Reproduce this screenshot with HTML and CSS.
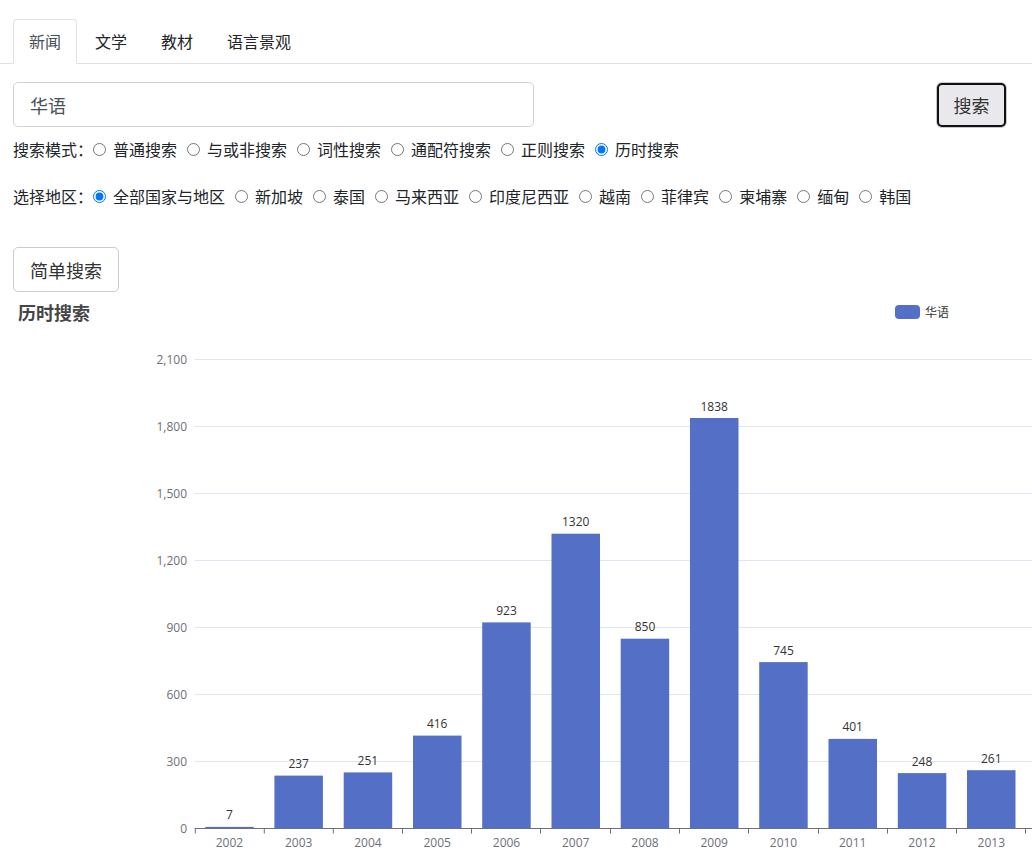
FILE: index.html
```html
<!DOCTYPE html>
<html lang="zh">
<head>
<meta charset="utf-8">
<title>历时搜索</title>
<link rel="stylesheet" href="styles.css">
</head>
<body>
<ul class="tabs">
  <li class="tab active">新闻</li>
  <li class="tab">文学</li>
  <li class="tab">教材</li>
  <li class="tab">语言景观</li>
</ul>
<div class="main">
  <div class="search-row">
    <input class="query" type="text" value="华语">
    <button class="search-btn">搜索</button>
  </div>
  <div class="radio-row mode-row">
    <span class="prefix">搜索模式：</span>
    <input type="radio" name="mode"><span class="opt">普通搜索</span>
    <input type="radio" name="mode"><span class="opt">与或非搜索</span>
    <input type="radio" name="mode"><span class="opt">词性搜索</span>
    <input type="radio" name="mode"><span class="opt">通配符搜索</span>
    <input type="radio" name="mode"><span class="opt">正则搜索</span>
    <input type="radio" name="mode" checked><span class="opt">历时搜索</span>
  </div>
  <div class="radio-row region-row">
    <span class="prefix">选择地区：</span>
    <input type="radio" name="region" checked><span class="opt">全部国家与地区</span>
    <input type="radio" name="region"><span class="opt">新加坡</span>
    <input type="radio" name="region"><span class="opt">泰国</span>
    <input type="radio" name="region"><span class="opt">马来西亚</span>
    <input type="radio" name="region"><span class="opt">印度尼西亚</span>
    <input type="radio" name="region"><span class="opt">越南</span>
    <input type="radio" name="region"><span class="opt">菲律宾</span>
    <input type="radio" name="region"><span class="opt">柬埔寨</span>
    <input type="radio" name="region"><span class="opt">缅甸</span>
    <input type="radio" name="region"><span class="opt">韩国</span>
  </div>
  <button class="simple-btn">简单搜索</button>
  <div class="chart">
    <svg class="chart-svg" width="1818" height="589" viewBox="0 0 1818 589">
      <text class="c-title" x="5" y="20">历时搜索</text>
      <rect class="c-bar" x="882" y="5" width="25" height="14" rx="4"/>
      <text class="c-legend" x="912" y="16.5">华语</text>

      <g class="c-grid">
        <line x1="181.8" y1="59.5" x2="1636.2" y2="59.5"/>
        <line x1="181.8" y1="126.5" x2="1636.2" y2="126.5"/>
        <line x1="181.8" y1="193.5" x2="1636.2" y2="193.5"/>
        <line x1="181.8" y1="260.5" x2="1636.2" y2="260.5"/>
        <line x1="181.8" y1="327.5" x2="1636.2" y2="327.5"/>
        <line x1="181.8" y1="394.5" x2="1636.2" y2="394.5"/>
        <line x1="181.8" y1="461.5" x2="1636.2" y2="461.5"/>
      </g>
      <g class="c-ylab">
        <text x="174" y="64">2,100</text>
        <text x="174" y="131">1,800</text>
        <text x="174" y="198">1,500</text>
        <text x="174" y="265">1,200</text>
        <text x="174" y="332">900</text>
        <text x="174" y="399">600</text>
        <text x="174" y="466">300</text>
        <text x="174" y="533">0</text>
      </g>

      <g class="c-bars">
        <rect class="c-bar" x="192.2" y="526.9" width="48.5" height="1.6"/>
        <rect class="c-bar" x="261.4" y="475.6" width="48.5" height="52.9"/>
        <rect class="c-bar" x="330.7" y="472.4" width="48.5" height="56.1"/>
        <rect class="c-bar" x="400.0" y="435.6" width="48.5" height="92.9"/>
        <rect class="c-bar" x="469.2" y="322.4" width="48.5" height="206.1"/>
        <rect class="c-bar" x="538.5" y="233.7" width="48.5" height="294.8"/>
        <rect class="c-bar" x="607.7" y="338.7" width="48.5" height="189.8"/>
        <rect class="c-bar" x="677.0" y="118.0" width="48.5" height="410.5"/>
        <rect class="c-bar" x="746.2" y="362.1" width="48.5" height="166.4"/>
        <rect class="c-bar" x="815.5" y="438.9" width="48.5" height="89.6"/>
        <rect class="c-bar" x="884.8" y="473.1" width="48.5" height="55.4"/>
        <rect class="c-bar" x="954.0" y="470.2" width="48.5" height="58.3"/>
      </g>
      <g class="c-val">
        <text x="216.4" y="519.4">7</text>
        <text x="285.7" y="468.1">237</text>
        <text x="354.9" y="464.9">251</text>
        <text x="424.2" y="428.1">416</text>
        <text x="493.5" y="314.9">923</text>
        <text x="562.7" y="226.2">1320</text>
        <text x="632.0" y="331.2">850</text>
        <text x="701.2" y="110.5">1838</text>
        <text x="770.5" y="354.6">745</text>
        <text x="839.7" y="431.4">401</text>
        <text x="909.0" y="465.6">248</text>
        <text x="978.3" y="462.7">261</text>
      </g>

      <line class="c-axis" x1="181.8" y1="528.5" x2="1636.2" y2="528.5"/>
      <g class="c-tick">
        <line x1="182.3" y1="528.5" x2="182.3" y2="533.5"/>
        <line x1="251.3" y1="528.5" x2="251.3" y2="533.5"/>
        <line x1="320.3" y1="528.5" x2="320.3" y2="533.5"/>
        <line x1="389.5" y1="528.5" x2="389.5" y2="533.5"/>
        <line x1="458.5" y1="528.5" x2="458.5" y2="533.5"/>
        <line x1="527.5" y1="528.5" x2="527.5" y2="533.5"/>
        <line x1="597.5" y1="528.5" x2="597.5" y2="533.5"/>
        <line x1="666.5" y1="528.5" x2="666.5" y2="533.5"/>
        <line x1="735.5" y1="528.5" x2="735.5" y2="533.5"/>
        <line x1="805.5" y1="528.5" x2="805.5" y2="533.5"/>
        <line x1="874.5" y1="528.5" x2="874.5" y2="533.5"/>
        <line x1="943.5" y1="528.5" x2="943.5" y2="533.5"/>
        <line x1="1012.5" y1="528.5" x2="1012.5" y2="533.5"/>
      </g>
      <g class="c-xlab">
        <text x="216.4" y="547">2002</text>
        <text x="285.7" y="547">2003</text>
        <text x="354.9" y="547">2004</text>
        <text x="424.2" y="547">2005</text>
        <text x="493.5" y="547">2006</text>
        <text x="562.7" y="547">2007</text>
        <text x="632.0" y="547">2008</text>
        <text x="701.2" y="547">2009</text>
        <text x="770.5" y="547">2010</text>
        <text x="839.7" y="547">2011</text>
        <text x="909.0" y="547">2012</text>
        <text x="978.3" y="547">2013</text>
      </g>
    </svg>
  </div>
</div>
</body>
</html>
```
FILE: styles.css
```css
html, body {
  margin: 0;
  padding: 0;
  overflow: hidden;
  background: #fff;
}
body {
  font-family: "Noto Sans CJK SC", "Microsoft YaHei", sans-serif;
  font-size: 16px;
  color: #212529;
}

.tabs {
  display: flex;
  list-style: none;
  margin: 0;
  padding: 19px 0 0 13px;
  height: 44px;
  border-bottom: 1px solid #dee2e6;
}
.tab {
  display: flex;
  align-items: center;
  height: 42px;
  padding: 0 15px 1px;
  margin-right: 2px;
  margin-bottom: -1px;
  border: 1px solid transparent;
  border-radius: 4px 4px 0 0;
  color: #212529;
  font-size: 16px;
  line-height: 24px;
}
.tab.active {
  border-color: #dee2e6 #dee2e6 #fff;
  background: #fff;
  color: #495057;
}

.main {
  padding: 0 13px;
}

.search-row {
  display: flex;
  align-items: center;
  justify-content: space-between;
  margin-top: 18px;
  margin-right: 13px;
}
.query {
  box-sizing: border-box;
  width: 521px;
  height: 45px;
  margin: 0;
  padding: 0 16px;
  border: 1px solid #ced4da;
  border-radius: 5px;
  font-family: "Noto Sans CJK SC", sans-serif;
  font-size: 18px;
  color: #495057;
  outline: none;
}
.search-btn {
  box-sizing: border-box;
  width: 69px;
  height: 44px;
  margin: 1px 0 0 0;
  padding: 0;
  border: 2px solid #111;
  border-radius: 5px;
  box-shadow: 0 0 0 1px #c8c8c8;
  background: #e9e9ed;
  font-family: "Noto Sans CJK SC", sans-serif;
  font-size: 18px;
  color: #333;
}

.radio-row {
  display: flex;
  align-items: center;
  height: 24px;
  line-height: 24px;
  font-size: 16px;
  white-space: nowrap;
}
.mode-row {
  margin-top: 10px;
}
.region-row {
  margin-top: 23px;
}
.radio-row input {
  width: 13px;
  height: 13px;
  margin: 0 7px 0 10px;
  padding: 0;
}
.radio-row .prefix + input {
  margin-left: 0;
}

.simple-btn {
  display: block;
  box-sizing: border-box;
  height: 45px;
  margin-top: 39px;
  padding: 0 16px;
  border: 1px solid #ccc;
  border-radius: 5px;
  background: #fff;
  font-family: "Noto Sans CJK SC", sans-serif;
  font-size: 18px;
  color: #333;
}

.chart {
  margin-top: 8px;
  margin-right: -13px;
  height: 589px;
  overflow: hidden;
}
.chart-svg {
  display: block;
}
.c-title {
  font-family: "Noto Sans CJK SC", sans-serif;
  font-size: 18px;
  font-weight: bold;
  fill: #464646;
}
.c-legend {
  font-family: "Noto Sans CJK SC", sans-serif;
  font-size: 12px;
  fill: #333;
}
.c-bar {
  fill: #5470c6;
}
.c-grid line {
  stroke: #e0e6f1;
  stroke-width: 1;
}
.c-axis, .c-tick line {
  stroke: #6e7079;
  stroke-width: 1;
}
.c-ylab text {
  font-family: "Open Sans", "Noto Sans", sans-serif;
  font-size: 12px;
  fill: #6e7079;
  text-anchor: end;
}
.c-xlab text {
  font-family: "Open Sans", "Noto Sans", sans-serif;
  font-size: 12px;
  fill: #6e7079;
  text-anchor: middle;
}
.c-val text {
  font-family: "Open Sans", "Noto Sans", sans-serif;
  font-size: 12px;
  fill: #333;
  text-anchor: middle;
}
```
